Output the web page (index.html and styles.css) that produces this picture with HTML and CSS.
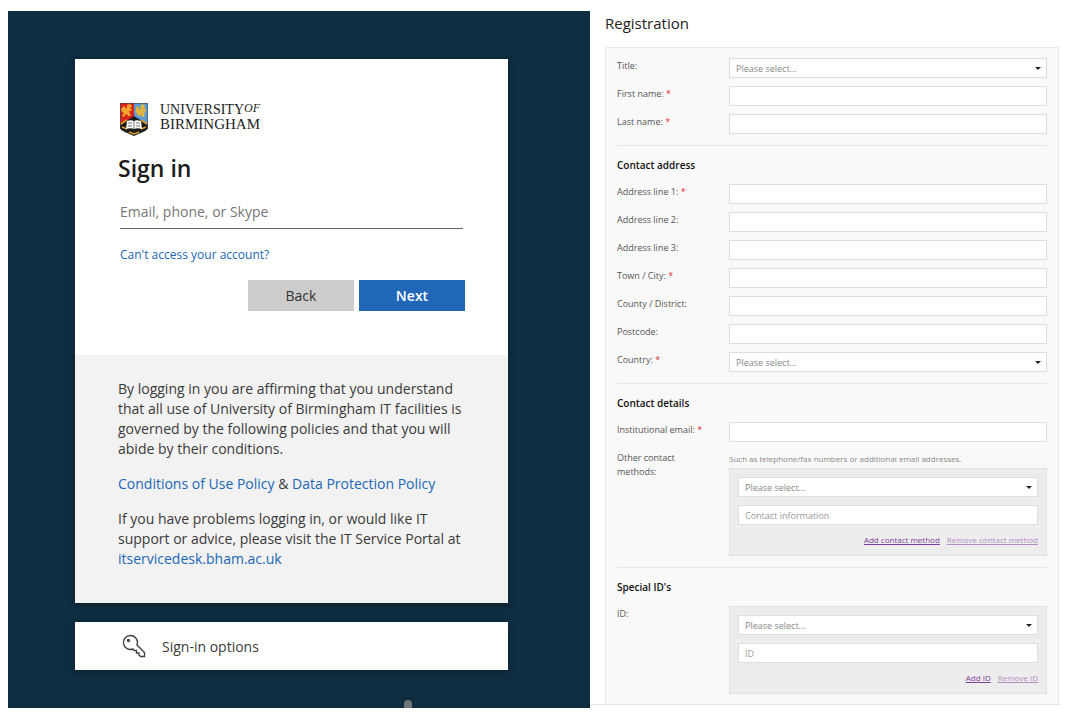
FILE: index.html
```html
<!DOCTYPE html>
<html lang="en">

<head>
    <meta charset="UTF-8">
    <meta name="viewport" content="width=device-width, initial-scale=1.0">
    <title>Sign in and registration</title>
    <link rel="stylesheet" href="styles.css">
</head>

<body>
    <div class="page">
        <section class="login">
            <div class="login-card">
                <form class="login-form">
                    <div class="brand">
                        <svg class="crest" viewBox="0 0 28 33" aria-hidden="true">
                            <path d="M0 0h14v24H0z" fill="#d9251c" />
                            <path d="M14 0h14v24H14z" fill="#5b9bd8" />
                            <path d="M0 22l14-9 14 9v3c0 3-9 5-14 8-5-3-14-5-14-8z" fill="#1c1a18" />
                            <path d="M3 4l2-1 0 2 2 0 0-3 3-1 2 2-2 2 2 2-1 1-2 0 1 3 1 2-3 0-1-2-2 1-1 2-2-1 2-3-2-1-1-3z" fill="#f4a72a" />
                            <path d="M16 4l2-1 1 3 2 0-1-3 3-2 2 2-1 2 2 1-1 3-1 3 1 2-3 0-1-2-2 1-2-1 0-2-2-1 1-2z" fill="#e0b43c" />
                            <path d="M1 21l6-4M27 21l-6-4M2 24l5 2M26 24l-5 2M9 29l5 2 5-2" stroke="#d89b26" stroke-width="1.600" fill="none" />
                            <path d="M7 18c3-1 5-1 7 0 2-1 4-1 7 0l1 8c-3-1-6-1-8 0-2-1-5-1-8 0z" fill="#fff" />
                            <path d="M14 18v8M8 20h4M16 20h4M8 23h4M16 23h4" stroke="#777" stroke-width="1" />
                            <path d="M.5.5h27V25c0 3-9 5-13.500 7.500C9 30 .5 28 .5 25z" fill="none" stroke="#444" stroke-width=".6" />
                        </svg>
                        <div class="brand-name">
                            <span class="brand-top">UNIVERSITY<span class="brand-of">OF</span></span>
                            <span class="brand-bottom">BIRMINGHAM</span>
                        </div>
                    </div>
                    <h1 class="login-title">Sign in</h1>
                    <input class="login-input" type="text" placeholder="Email, phone, or Skype" aria-label="Email, phone, or Skype">
                    <a class="login-help" href="#">Can't access your account?</a>
                    <div class="login-buttons">
                        <button class="btn btn-back" type="button">Back</button>
                        <button class="btn btn-next" type="submit">Next</button>
                    </div>
                </form>
                <div class="login-notice">
                    <p>By logging in you are affirming that you understand that all use of University of Birmingham IT facilities is governed by the following policies and that you will abide by their conditions.</p>
                    <p><a href="#">Conditions of Use Policy</a> &amp; <a href="#">Data Protection Policy</a></p>
                    <p>If you have problems logging in, or would like IT support or advice, please visit the IT Service Portal at <a href="#">itservicedesk.bham.ac.uk</a></p>
                </div>
            </div>
            <button class="login-options" type="button">
                <svg class="key" viewBox="0 0 24 24" aria-hidden="true">
                    <path d="M8.500 1.500a7 7 0 1 0 2.500 13.500l1 1.500h2.500v2.500h2.500v2l1.500 1.500h4v-4l-7.500-7.500A7 7 0 0 0 8.500 1.500z" />
                    <circle cx="6.500" cy="6.500" r="1" />
                </svg>
                <span>Sign-in options</span>
            </button>
            <!-- top of the clock tower -->
            <div class="tower"></div>
        </section>

        <section class="register">
            <h2 class="register-title">Registration</h2>
            <form class="register-card">
                <div class="group">
                    <div class="row">
                        <label for="title">Title:</label>
                        <div class="select"><select id="title"><option>Please select...</option></select></div>
                    </div>
                    <div class="row">
                        <label for="first">First name: <em>*</em></label>
                        <input id="first" type="text">
                    </div>
                    <div class="row">
                        <label for="last">Last name: <em>*</em></label>
                        <input id="last" type="text">
                    </div>
                </div>

                <div class="group">
                    <h3>Contact address</h3>
                    <div class="row">
                        <label for="line1">Address line 1: <em>*</em></label>
                        <input id="line1" type="text">
                    </div>
                    <div class="row">
                        <label for="line2">Address line 2:</label>
                        <input id="line2" type="text">
                    </div>
                    <div class="row">
                        <label for="line3">Address line 3:</label>
                        <input id="line3" type="text">
                    </div>
                    <div class="row">
                        <label for="town">Town / City: <em>*</em></label>
                        <input id="town" type="text">
                    </div>
                    <div class="row">
                        <label for="county">County / District:</label>
                        <input id="county" type="text">
                    </div>
                    <div class="row">
                        <label for="postcode">Postcode:</label>
                        <input id="postcode" type="text">
                    </div>
                    <div class="row">
                        <label for="country">Country: <em>*</em></label>
                        <div class="select"><select id="country"><option>Please select...</option></select></div>
                    </div>
                </div>

                <div class="group">
                    <h3>Contact details</h3>
                    <div class="row">
                        <label for="email">Institutional email: <em>*</em></label>
                        <input id="email" type="email">
                    </div>
                    <div class="row">
                        <label for="method">Other contact methods:</label>
                        <div>
                            <p class="hint">Such as telephone/fax numbers or additional email addresses.</p>
                            <div class="box">
                                <div class="select"><select id="method"><option>Please select...</option></select></div>
                                <input type="text" placeholder="Contact information" aria-label="Contact information">
                                <div class="box-links">
                                    <a href="#">Add contact method</a>
                                    <a class="remove" href="#">Remove contact method</a>
                                </div>
                            </div>
                        </div>
                    </div>
                </div>

                <div class="group">
                    <h3>Special ID's</h3>
                    <div class="row">
                        <label for="idtype">ID:</label>
                        <div class="box">
                            <div class="select"><select id="idtype"><option>Please select...</option></select></div>
                            <input type="text" placeholder="ID" aria-label="ID">
                            <div class="box-links">
                                <a href="#">Add ID</a>
                                <a class="remove" href="#">Remove ID</a>
                            </div>
                        </div>
                    </div>
                </div>
            </form>
        </section>
    </div>
</body>

</html>
```
FILE: styles.css
```css
* {
    box-sizing: border-box;
}

body {
    margin: 0;
    background: #fff;
    font-family: "Open Sans", "Noto Sans", sans-serif;
}

h1,
h2,
h3,
p {
    margin: 0;
}

input,
select,
button {
    font-family: inherit;
    border-radius: 0;
}

.page {
    display: grid;
    grid-template-columns: 582fr 471fr;
    padding: 11px 8px 5px;
}

/* sign in */
.login {
    position: relative;
    padding: 48px 82px 38px 67px;
    background: #0f2d40;
}

.login-card,
.login-options {
    box-shadow: 0 2px 6px rgba(0, 0, 0, 0.3);
}

.login-form {
    display: flex;
    flex-direction: column;
    padding: 44px 43px 44px;
    background: #fff;
}

.brand {
    display: flex;
    gap: 12px;
    height: 34px;
}

.crest {
    width: 28px;
    height: 33px;
    margin-left: 2px;
}

.brand-name {
    display: flex;
    flex-direction: column;
    font-family: "Liberation Serif", serif;
    line-height: 14px;
    color: #222;
}

.brand-top {
    font-size: 14px;
}

.brand-of {
    font-size: 12px;
    font-style: italic;
    vertical-align: top;
    line-height: 10px;
}

.brand-bottom {
    font-size: 15px;
}

.login-title {
    margin-top: 15px;
    font-size: 23px;
    font-weight: 600;
    line-height: 32px;
    color: #1b1b1b;
}

.login-input {
    height: 33px;
    margin: 12px 2px 0;
    padding: 0 0 2px;
    border: 0;
    border-bottom: 1px solid #666;
    font-size: 14px;
    color: #1b1b1b;
}

.login-input::placeholder {
    color: #777;
}

.login-help {
    align-self: flex-start;
    margin: 16px 0 0 2px;
    font-size: 12px;
    line-height: 20px;
}

.login a {
    color: #2067b8;
    text-decoration: none;
}

.login-buttons {
    display: flex;
    justify-content: flex-end;
    gap: 5px;
    margin-top: 15px;
}

.btn {
    width: 106px;
    height: 31px;
    padding: 0;
    border: 0;
    font-size: 14px;
}

.btn-back {
    background: #ccc;
    color: #333;
}

.btn-next {
    background: #2067b8;
    color: #fff;
    font-weight: 600;
}

.login-notice {
    display: flex;
    flex-direction: column;
    gap: 15px;
    padding: 24px 43px 34px;
    background: #f2f2f2;
    font-size: 14px;
    line-height: 20px;
    color: #3a3a3a;
}

.login-options {
    display: flex;
    align-items: center;
    gap: 16px;
    width: 100%;
    height: 48px;
    margin-top: 19px;
    padding: 0 47px;
    border: 0;
    background: #fff;
    font-size: 14px;
    color: #3a3a3a;
}

.key {
    width: 24px;
    height: 24px;
    fill: none;
    stroke: #444;
    stroke-width: 1.4;
}

.tower {
    position: absolute;
    bottom: 0;
    left: 68%;
    width: 8px;
    height: 8px;
    border-radius: 50% 50% 0 0;
    background: #6f7478;
}

/* registration */
.register {
    align-self: start;
    padding: 0 2px 0 15px;
    border-bottom: 1px solid #e6e6e6;
}

.register-title {
    padding-bottom: 11px;
    font-size: 15px;
    font-weight: 400;
    line-height: 25px;
    color: #222;
}

.register-card {
    padding: 0 11px;
    border: 1px solid #e8e8e8;
    border-bottom: 0;
    border-radius: 2px 2px 0 0;
    background: #f9f9f9;
    font-size: 9px;
    line-height: 14px;
    color: #555;
}

.group {
    display: flex;
    flex-direction: column;
    gap: 8px;
    padding: 11px 0;
    border-bottom: 1px solid #e8e8e8;
}

.group:first-child {
    padding-top: 10px;
}

.group:last-child {
    padding-bottom: 10px;
    border-bottom: 0;
}

.group h3 {
    margin-bottom: 3px;
    font-size: 10px;
    font-weight: 600;
    line-height: 16px;
    color: #111;
}

.row {
    display: grid;
    grid-template-columns: 92px 1fr;
    column-gap: 20px;
}

.row label {
    padding-top: 1px;
}

.row em {
    font-style: normal;
    color: #e03030;
}

.row input,
.row select {
    display: block;
    width: 100%;
    height: 20px;
    padding: 0 6px;
    border: 1px solid #ddd;
    background: #fff;
    font-size: 9px;
    color: #888;
    appearance: none;
}

.row input::placeholder {
    color: #999;
}

.select {
    position: relative;
}

.select::after {
    content: '';
    position: absolute;
    top: 9px;
    right: 6px;
    border: 3px solid transparent;
    border-top-color: #222;
    border-bottom: 0;
    pointer-events: none;
}

.hint {
    padding: 2px 0;
    font-size: 8px;
    color: #888;
}

.box {
    display: flex;
    flex-direction: column;
    gap: 8px;
    padding: 8px;
    border: 1px solid #e2e2e2;
    background: #ededed;
}

.box-links {
    display: flex;
    justify-content: flex-end;
    gap: 7px;
    font-size: 8px;
}

.box-links a {
    color: #7b3f98;
}

.box-links .remove {
    color: #b48cc4;
}
```
